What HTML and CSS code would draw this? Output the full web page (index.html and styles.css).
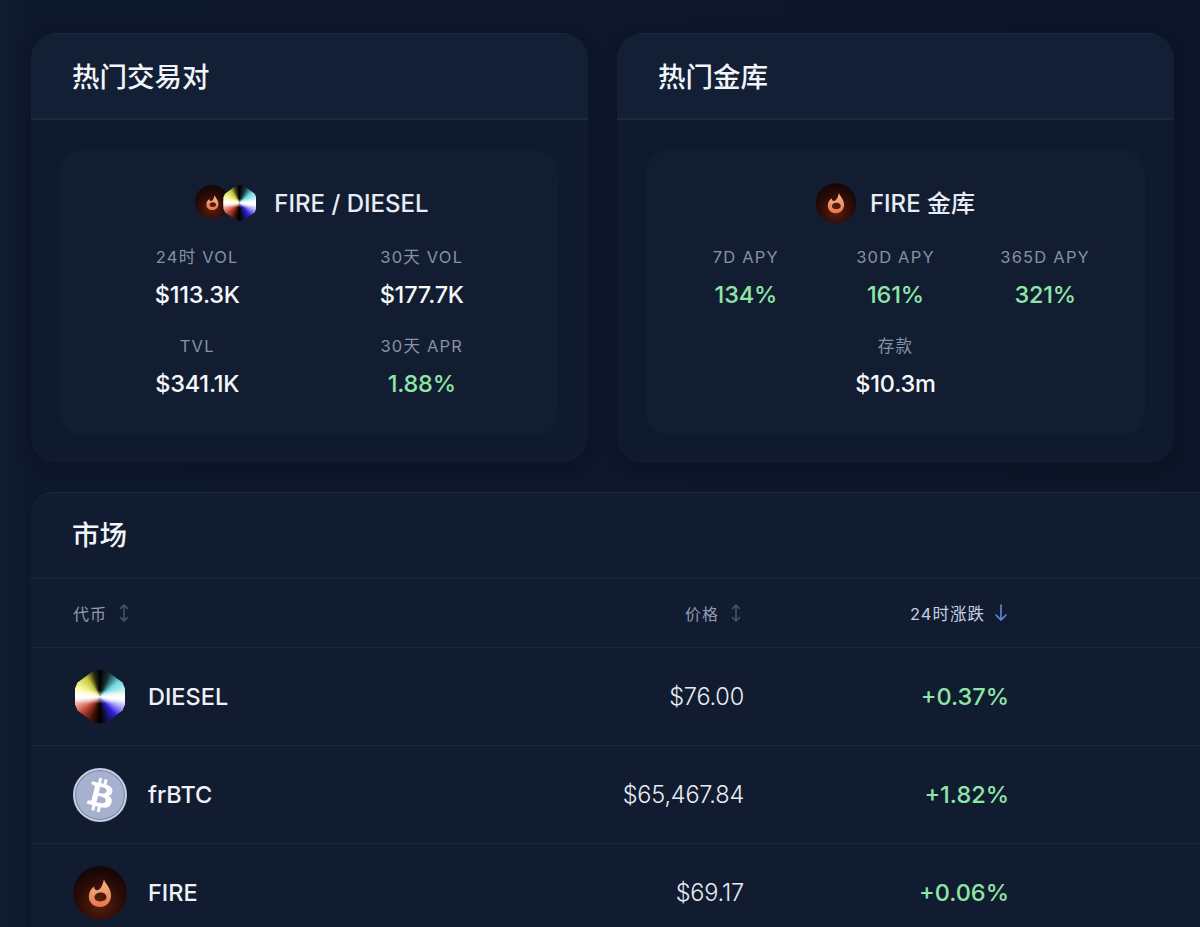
FILE: index.html
```html
<!DOCTYPE html>
<html lang="zh-CN">
<head>
  <meta charset="UTF-8">
  <title>市场</title>
  <link rel="stylesheet" href="styles.css">
</head>
<body>
  <svg class="defs" width="0" height="0">
    <defs>
      <linearGradient id="flameFill" x1="0" y1="0" x2="0" y2="1">
        <stop offset="0" stop-color="#f3b98c"/>
        <stop offset="1" stop-color="#e9764a"/>
      </linearGradient>
      <symbol id="flame" viewBox="0 0 24 30">
        <path fill="url(#flameFill)" fill-rule="evenodd" d="M16 1c.2 3.600 6.500 8 7 15.500C23.400 24 18.500 29 12 29S.6 24.500 .8 18C1 13.500 3.500 10.500 6 8.500c.3 2.500 1.300 3.800 3 3.800C12.500 12.300 15 6.500 16 1ZM12.500 14.500c-3.500 0-6 2.300-6 4.800s2.500 4.200 6 4.200 6-1.900 6-4.400-2.500-4.600-6-4.600Z"/>
      </symbol>
      <symbol id="sort" viewBox="0 0 12 20">
        <path d="M6 2v16M2.500 5.500 6 2l3.500 3.500M2.500 14.500 6 18l3.500-3.500" fill="none" stroke="currentColor" stroke-width="1.600" stroke-linecap="round" stroke-linejoin="round"/>
      </symbol>
      <symbol id="down" viewBox="0 0 14 20">
        <path d="M7 2v15M2 12l5 5 5-5" fill="none" stroke="currentColor" stroke-width="1.600" stroke-linecap="round" stroke-linejoin="round"/>
      </symbol>
    </defs>
  </svg>

  <div class="top-grid">
    <section class="card">
      <h2 class="card-head">热门交易对</h2>
      <div class="card-body">
        <div class="panel">
          <div class="panel-title pair-title">
            <span class="pair-icons">
              <span class="fire fire-small"><svg class="flame"><use href="#flame"/></svg></span>
              <span class="diesel diesel-small"></span>
            </span>
            <span class="panel-name">FIRE / DIESEL</span>
          </div>
          <div class="stats stats-two">
            <div class="stat"><div class="stat-label">24时 VOL</div><div class="stat-value">$113.3K</div></div>
            <div class="stat"><div class="stat-label">30天 VOL</div><div class="stat-value">$177.7K</div></div>
            <div class="stat"><div class="stat-label">TVL</div><div class="stat-value">$341.1K</div></div>
            <div class="stat"><div class="stat-label">30天 APR</div><div class="stat-value green">1.88%</div></div>
          </div>
        </div>
      </div>
    </section>

    <section class="card">
      <h2 class="card-head">热门金库</h2>
      <div class="card-body">
        <div class="panel">
          <div class="panel-title vault-title">
            <span class="fire fire-medium"><svg class="flame"><use href="#flame"/></svg></span>
            <span class="panel-name">FIRE 金库</span>
          </div>
          <div class="stats stats-three">
            <div class="stat"><div class="stat-label">7D APY</div><div class="stat-value green">134%</div></div>
            <div class="stat"><div class="stat-label">30D APY</div><div class="stat-value green">161%</div></div>
            <div class="stat"><div class="stat-label">365D APY</div><div class="stat-value green">321%</div></div>
            <div class="stat stat-second"><div class="stat-label">存款</div><div class="stat-value">$10.3m</div></div>
          </div>
        </div>
      </div>
    </section>
  </div>

  <section class="market">
    <h2 class="market-head">市场</h2>
    <div class="market-row market-columns">
      <div class="col-head">代币 <svg class="sort-icon"><use href="#sort"/></svg></div>
      <div class="col-head col-right">价格 <svg class="sort-icon"><use href="#sort"/></svg></div>
      <div class="col-head col-right col-active">24时涨跌 <svg class="down-icon"><use href="#down"/></svg></div>
    </div>

    <div class="market-row token-row">
      <div class="token"><span class="icon-slot"><span class="diesel diesel-large"></span></span>DIESEL</div>
      <div class="price">$76.00</div>
      <div class="change">+0.37%</div>
    </div>
    <div class="market-row token-row">
      <div class="token">
        <span class="icon-slot">
          <span class="btc">
            <svg viewBox="1.5 1.5 29 29"><path fill="#fff" d="M23.189 14.020c.314-2.096-1.283-3.223-3.465-3.975l.708-2.840-1.728-.430-.690 2.765c-.454-.114-.920-.220-1.385-.326l.695-2.783L15.596 6l-.708 2.839c-.376-.086-.746-.170-1.104-.260l.002-.009-2.384-.595-.460 1.846s1.283.294 1.256.312c.700.175.826.638.805 1.006l-.806 3.235c.048.012.110.030.180.057l-.183-.045-1.130 4.532c-.086.212-.303.531-.793.410.018.025-1.256-.313-1.256-.313l-.858 1.978 2.250.561c.418.105.828.215 1.231.318l-.715 2.872 1.727.430.708-2.840c.472.127.930.245 1.378.357l-.706 2.828 1.728.430.715-2.866c2.948.558 5.164.333 6.097-2.333.752-2.146-.037-3.385-1.588-4.192 1.130-.260 1.980-1.003 2.207-2.538zm-3.950 5.538c-.533 2.147-4.148.986-5.320.695l.950-3.805c1.172.293 4.929.872 4.370 3.110zm.535-5.569c-.487 1.953-3.495.960-4.470.717l.860-3.450c.975.243 4.118.696 3.610 2.733z"/></svg>
          </span>
        </span>frBTC
      </div>
      <div class="price">$65,467.84</div>
      <div class="change">+1.82%</div>
    </div>
    <div class="market-row token-row">
      <div class="token"><span class="icon-slot"><span class="fire fire-large"><svg class="flame"><use href="#flame"/></svg></span></span>FIRE</div>
      <div class="price">$69.17</div>
      <div class="change">+0.06%</div>
    </div>
  </section>
</body>
</html>
```

FILE: styles.css
```css
* {
  margin: 0;
  padding: 0;
  box-sizing: border-box;
}
html, body {
  height: 927px;
  overflow: hidden;
}
body {
  font-family: Inter, "Noto Sans CJK SC", sans-serif;
  color: #f1f5f9;
  background: linear-gradient(90deg, #101c31 0, #0e182c 30px, #0d1529 100%);
  padding: 33px 0 0 31px;
}
.defs {
  display: block;
  height: 0;
}
.top-grid {
  display: grid;
  grid-template-columns: 557px 557px;
  gap: 29px;
}
.card {
  height: 430px;
  border-radius: 26px;
  background: #0f1a2e;
  box-shadow: 0 4px 14px rgba(8, 14, 28, 0.4);
  overflow: hidden;
}
.card-head {
  height: 87px;
  padding: 25px 41px 0;
  font-size: 27.500px;
  line-height: 36px;
  font-weight: 500;
  background: #131f35;
  border-top: 1px solid #1b2942;
  border-bottom: 2px solid #1a2840;
}
.card-body {
  padding: 30px 29px 28px;
}
.panel {
  height: 285px;
  padding: 33px 25px 0;
  border-radius: 24px;
  background: #121d31;
  box-shadow: 0 0 8px rgba(18, 29, 49, 0.6);
}
.panel-title {
  display: flex;
  align-items: center;
  justify-content: center;
  gap: 18px;
  height: 40px;
  font-size: 24px;
  line-height: 36px;
  font-weight: 500;
  color: #e8edf5;
}
.panel-name {
  padding-top: 2px;
}
.pair-title {
  padding-left: 5px;
}
.vault-title {
  gap: 14px;
}
.pair-icons {
  display: flex;
}
.pair-icons .diesel {
  margin-left: -6px;
}
.stats {
  display: grid;
  row-gap: 21px;
  margin-top: 22px;
}
.stats-two {
  grid-template-columns: 1fr 1fr;
}
.stats-three {
  grid-template-columns: 1fr 1fr 1fr;
}
.stat-second {
  grid-column: 2;
}
.stat {
  text-align: center;
  height: 68px;
}
.stat-label {
  font-size: 16.500px;
  line-height: 24px;
  letter-spacing: 1.200px;
  color: #8592a6;
}
.stat-value {
  margin-top: 8px;
  font-size: 23.500px;
  line-height: 36px;
  font-weight: 500;
  letter-spacing: -0.200px;
  color: #f5f7fa;
}
.stat-value.green {
  color: #8ee6a6;
}
.fire {
  display: flex;
  flex: none;
  align-items: center;
  justify-content: center;
  border-radius: 50%;
  background: radial-gradient(circle at 50% 68%, #5e200e 0, #2e0c07 45%, #170706 72%, #100608 100%);
}
.flame {
  display: block;
}
.fire-small {
  width: 34px;
  height: 34px;
}
.fire-small .flame {
  width: 13px;
  height: 17px;
}
.fire-medium {
  width: 40px;
  height: 40px;
}
.fire-medium .flame {
  width: 18px;
  height: 22px;
}
.fire-large {
  width: 54px;
  height: 54px;
}
.fire-large .flame {
  width: 24px;
  height: 30px;
}
.diesel {
  display: block;
  flex: none;
  background:
    linear-gradient(180deg, transparent 38%, rgba(255, 255, 255, 0.85) 50%, transparent 62%),
    conic-gradient(#000 0deg, #17343a 22deg, #6fd8e0 50deg, #e8f8f8 85deg, #fff 95deg, #b0a8f8 115deg, #3020e0 140deg, #101040 165deg, #000 180deg, #401008 200deg, #c04830 230deg, #f0b0a8 255deg, #fff 270deg, #f8f8a0 295deg, #c8c840 325deg, #2a2a10 345deg, #000 360deg);
  clip-path: polygon(50% 0, 62% 2%, 95% 24%, 100% 35%, 100% 65%, 95% 76%, 62% 98%, 50% 100%, 38% 98%, 5% 76%, 0 65%, 0 35%, 5% 24%, 38% 2%);
}
.diesel-small {
  width: 33px;
  height: 36px;
}
.diesel-large {
  width: 50px;
  height: 54px;
}
.market {
  margin-top: 29px;
  border-top: 1px solid #1d2a43;
  border-radius: 22px 0 0 0;
  background: #121c30;
}
.market-head {
  height: 86px;
  padding: 24px 41px 0;
  font-size: 27.500px;
  line-height: 36px;
  font-weight: 500;
  border-bottom: 1px solid #1a2740;
}
.market-row {
  display: grid;
  grid-template-columns: 400px 271px 265px 1fr;
  align-items: center;
  padding-left: 42px;
  border-bottom: 1px solid #1a2539;
}
.market-row > * {
  min-width: 0;
}
.market-columns {
  height: 69px;
}
.col-head {
  display: flex;
  align-items: center;
  gap: 11px;
  font-size: 16px;
  letter-spacing: 1px;
  color: #8f9bae;
}
.col-right {
  justify-content: flex-end;
}
.col-active {
  gap: 9px;
  font-size: 16.500px;
  color: #c6d0e0;
}
.sort-icon {
  width: 12px;
  height: 20px;
  color: #465266;
}
.col-right .sort-icon {
  margin-right: 2px;
}
.down-icon {
  width: 14px;
  height: 20px;
  color: #5f8ddc;
  margin-right: 1px;
}
.token-row {
  height: 98px;
}
.token {
  display: flex;
  align-items: center;
  font-size: 23.500px;
  font-weight: 500;
  color: #eef2f7;
}
.icon-slot {
  display: flex;
  justify-content: center;
  width: 54px;
  margin-right: 21px;
}
.btc {
  display: block;
  flex: none;
  width: 54px;
  height: 54px;
  border-radius: 50%;
  background: #a6b1cf;
  border: 2px solid #c6cee2;
  box-shadow: inset 0 0 0 1px #76839f;
}
.btc svg {
  display: block;
  width: 50px;
  height: 50px;
}
.price {
  text-align: right;
  font-size: 23.500px;
  font-weight: 300;
  letter-spacing: -0.200px;
  color: #e8edf5;
}
.change {
  text-align: right;
  font-size: 23.500px;
  font-weight: 500;
  color: #8ee6a6;
}
```
